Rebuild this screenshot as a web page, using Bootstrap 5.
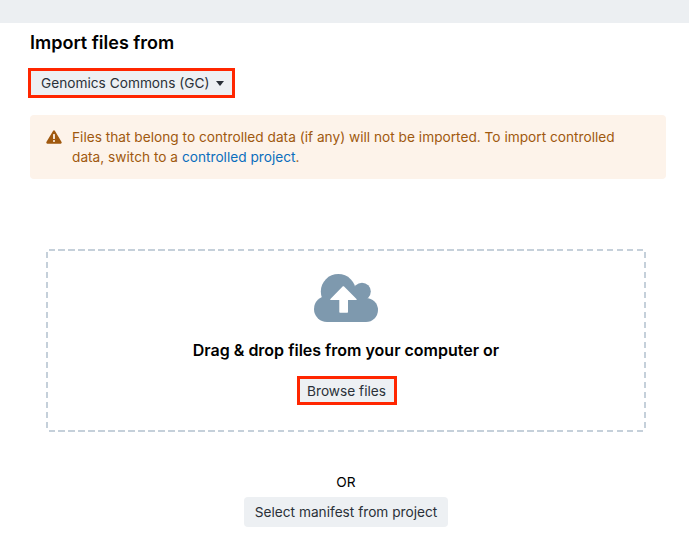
<!DOCTYPE html>
<html lang="en">
<head>
<meta charset="utf-8">
<title>Import files</title>
<link href="https://cdn.jsdelivr.net/npm/bootstrap@5.3.0/dist/css/bootstrap.min.css" rel="stylesheet">
<style>
html,body{height:536px;overflow:hidden}
body{font-family:Inter,"Liberation Sans",sans-serif;color:#000;background:#fff;font-size:13.7px}
.topstrip{height:23px;background:#eceff2}
.panel{padding:0 23px 0 30px}
.ttl{font-size:18px;font-weight:600;line-height:20px;margin:10px 0 15px}
.softbtn{background:#edf0f3;color:#2a3038;font-size:13.7px;line-height:20px;border:0;border-radius:3px;padding:2px 10px;}
.softbtn:hover{background:#edf0f3;color:#2a3038}
.redmark{border:3px solid #ff2600;border-radius:0}
.srcbtn{margin-left:-2px;width:207px;height:30px;padding:0 0 0 10px;display:flex;align-items:center;gap:7px}
.caretx{width:0;height:0;border-left:4.5px solid transparent;border-right:4.5px solid transparent;border-top:5px solid #2a3038}
.warnbox{margin-top:17px;height:64px;background:#fdf3ea;color:#a0590f;border-radius:4px;padding:12px 20px 12px 16px;gap:10px;line-height:20px;font-size:13.7px;width:636px}
.warnbox a{color:#0a6ebd;text-decoration:none}
.warnico{flex:none;margin-top:3px}
.dropzone{margin:70px 0 0 16px;width:600px;height:183px;padding-top:25px;
  background:
   repeating-linear-gradient(90deg,transparent 0 2.5px,#c5d0da 2.5px 9px,transparent 9px 9.97px) 0 0/598px 2px no-repeat,
   repeating-linear-gradient(90deg,transparent 0 2.5px,#c5d0da 2.5px 9px,transparent 9px 9.97px) 0 100%/598px 2px no-repeat,
   repeating-linear-gradient(180deg,transparent 0 2.7px,#c5d0da 2.7px 9px,transparent 9px 10px) 0 0/2px 180px no-repeat,
   repeating-linear-gradient(180deg,transparent 0 2.7px,#c5d0da 2.7px 9px,transparent 9px 10px) 100% 0/2px 180px no-repeat}
.dropttl{font-size:16px;font-weight:600;line-height:20px;margin:18px 0 16px}
.browse{width:100px;height:29px;padding:0;margin-left:1px}
.orline{margin:40px 0 5px 16px;width:600px;line-height:20px}
.manifestrow{width:600px;margin-left:16px}
.manifest{height:30px;padding:0 10.5px;border-radius:4px}
</style>
</head>
<body>
<div class="topstrip"></div>
<div class="panel">
  <h1 class="ttl">Import files from</h1>
  <button type="button" class="btn softbtn redmark srcbtn">Genomics Commons (GC)<span class="caretx"></span></button>
  <div class="warnbox d-flex">
    <svg class="warnico" width="16" height="14" viewBox="0 0 16 14" aria-hidden="true"><path fill="#a0590f" d="M8 .3c.4 0 .8.2 1 .6l6.6 11.2c.4.8-.1 1.600-1 1.600H1.400c-.9 0-1.400-.8-1-1.600L7 .9c.2-.4.6-.6 1-.6z"/><rect x="7.100" y="4" width="1.800" height="5" rx=".6" fill="#fdf3ea"/><circle cx="8" cy="11" r="1.050" fill="#fdf3ea"/></svg>
    <div>Files that belong to controlled data (if any) will not be imported. To import controlled data, switch to a <a href="#">controlled project</a>.</div>
  </div>
  <div class="dropzone d-flex flex-column align-items-center">
    <svg width="64" height="48" viewBox="0 0 64 48" aria-hidden="true"><g fill="#7e99ae"><circle cx="24.300" cy="17.500" r="17.500"/><circle cx="48" cy="17.500" r="8.800"/><circle cx="13" cy="35" r="13"/><circle cx="52" cy="36" r="12"/><rect x="13" y="20" width="39" height="28"/></g><path fill="#fff" d="M28.600 12.500c.4-.5 1.100-.5 1.500 0l12.400 12.500c.4.400.1 1-.4 1H34V38c0 .4-.3.700-.7.700h-7.300c-.4 0-.7-.3-.7-.7V26h-8.500c-.5 0-.8-.6-.4-1z"/></svg>
    <div class="dropttl">Drag &amp; drop files from your computer or</div>
    <button type="button" class="btn softbtn redmark browse">Browse files</button>
  </div>
  <div class="orline text-center">OR</div>
  <div class="manifestrow text-center"><button type="button" class="btn softbtn manifest">Select manifest from project</button></div>
</div>
<script src="https://cdn.jsdelivr.net/npm/bootstrap@5.3.0/dist/js/bootstrap.bundle.min.js"></script>
</body>
</html>
